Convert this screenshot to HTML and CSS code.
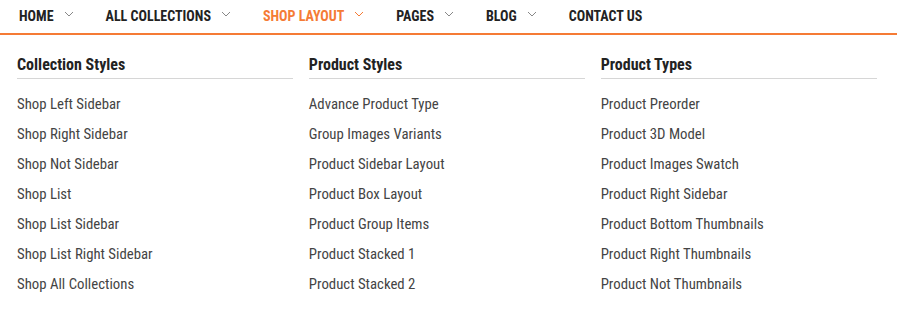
FILE: index.html
```html
<!DOCTYPE html>
<html>
<head>
<meta charset="utf-8">
<link rel="stylesheet" href="styles.css">
</head>
<body>
<nav class="nav">
  <a class="nav-item">HOME <svg class="chev" viewBox="0 0 10 6"><path d="M1 1l4 4 4-4"/></svg></a>
  <a class="nav-item">ALL COLLECTIONS <svg class="chev" viewBox="0 0 10 6"><path d="M1 1l4 4 4-4"/></svg></a>
  <a class="nav-item active">SHOP LAYOUT <svg class="chev" viewBox="0 0 10 6"><path d="M1 1l4 4 4-4"/></svg></a>
  <a class="nav-item">PAGES <svg class="chev" viewBox="0 0 10 6"><path d="M1 1l4 4 4-4"/></svg></a>
  <a class="nav-item">BLOG <svg class="chev" viewBox="0 0 10 6"><path d="M1 1l4 4 4-4"/></svg></a>
  <a class="nav-item">CONTACT US</a>
</nav>
<div class="mega">
  <div class="col">
    <h3 class="col-title">Collection Styles</h3>
    <ul class="links">
      <li>Shop Left Sidebar</li>
      <li>Shop Right Sidebar</li>
      <li>Shop Not Sidebar</li>
      <li>Shop List</li>
      <li>Shop List Sidebar</li>
      <li>Shop List Right Sidebar</li>
      <li>Shop All Collections</li>
    </ul>
  </div>
  <div class="col">
    <h3 class="col-title">Product Styles</h3>
    <ul class="links">
      <li>Advance Product Type</li>
      <li>Group Images Variants</li>
      <li>Product Sidebar Layout</li>
      <li>Product Box Layout</li>
      <li>Product Group Items</li>
      <li>Product Stacked 1</li>
      <li>Product Stacked 2</li>
    </ul>
  </div>
  <div class="col">
    <h3 class="col-title">Product Types</h3>
    <ul class="links">
      <li>Product Preorder</li>
      <li>Product 3D Model</li>
      <li>Product Images Swatch</li>
      <li>Product Right Sidebar</li>
      <li>Product Bottom Thumbnails</li>
      <li>Product Right Thumbnails</li>
      <li>Product Not Thumbnails</li>
    </ul>
  </div>
</div>
</body>
</html>
```
FILE: styles.css
```css
* { box-sizing: border-box; }
body {
  margin: 0;
  background: #fff;
  font-family: "Roboto Condensed", Roboto, sans-serif;
  font-stretch: condensed;
}
.nav {
  display: flex;
  align-items: center;
  height: 35px;
  padding: 0 0 0 19px;
  border-bottom: 2px solid #f57b35;
}
.nav-item {
  display: flex;
  align-items: center;
  font-size: 14px;
  font-weight: 700;
  color: #222;
  margin-right: 32px;
  padding-bottom: 1px;
}
.nav-item.active { color: #f57b35; }
.chev {
  width: 10px;
  height: 6px;
  margin-left: 10px;
  margin-top: -4px;
  fill: none;
  stroke: #888;
  stroke-width: 1;
}
.nav-item.active .chev { stroke: #f57b35; }
.mega {
  display: grid;
  grid-template-columns: repeat(3, 1fr);
  column-gap: 15.5px;
  padding: 0 20px 0 17px;
}
.col-title {
  margin: 20px 0 0;
  padding-bottom: 4px;
  font-size: 16px;
  font-weight: 700;
  color: #222;
  border-bottom: 1px solid #d6d6d6;
}
.links {
  list-style: none;
  margin: 10px 0 0;
  padding: 0;
}
.links li {
  font-size: 14.8px;
  color: #444;
  line-height: 30px;
}
```
